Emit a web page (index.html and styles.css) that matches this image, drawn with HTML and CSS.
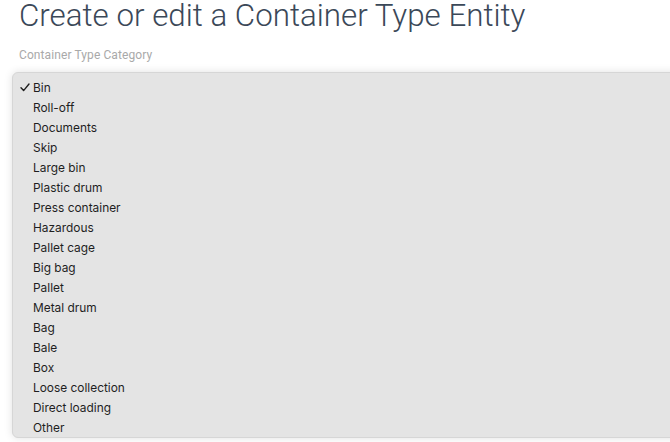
FILE: index.html
```html
<!DOCTYPE html>
<html>
<head>
<meta charset="utf-8">
<link rel="stylesheet" href="styles.css">
</head>
<body>
<div class="page">
  <h1 class="title">Create or edit a Container Type Entity</h1>
  <div class="label">Container Type Category</div>
  <div class="field-area">
    <ul class="menu">
      <li class="item selected"><span class="check"><svg width="10" height="9" viewBox="0 0 10 9"><polyline points="1,4.8 3.6,7.6 9,1" fill="none" stroke="#1f1f1f" stroke-width="1.4" stroke-linecap="round" stroke-linejoin="round"/></svg></span>Bin</li>
      <li class="item"><span class="check"></span>Roll-off</li>
      <li class="item"><span class="check"></span>Documents</li>
      <li class="item"><span class="check"></span>Skip</li>
      <li class="item"><span class="check"></span>Large bin</li>
      <li class="item"><span class="check"></span>Plastic drum</li>
      <li class="item"><span class="check"></span>Press container</li>
      <li class="item"><span class="check"></span>Hazardous</li>
      <li class="item"><span class="check"></span>Pallet cage</li>
      <li class="item"><span class="check"></span>Big bag</li>
      <li class="item"><span class="check"></span>Pallet</li>
      <li class="item"><span class="check"></span>Metal drum</li>
      <li class="item"><span class="check"></span>Bag</li>
      <li class="item"><span class="check"></span>Bale</li>
      <li class="item"><span class="check"></span>Box</li>
      <li class="item"><span class="check"></span>Loose collection</li>
      <li class="item"><span class="check"></span>Direct loading</li>
      <li class="item"><span class="check"></span>Other</li>
    </ul>
  </div>
</div>
</body>
</html>
```

FILE: styles.css
```css
html, body {
  margin: 0;
  padding: 0;
  background: #ffffff;
  overflow: hidden;
}
.page {
  width: 670px;
  height: 442px;
  overflow: hidden;
}
.title {
  margin: -2px 0 0 0;
  padding: 0 0 0 19px;
  font-family: Roboto, "Liberation Sans", sans-serif;
  font-weight: 300;
  font-size: 31.3px;
  line-height: 36px;
  color: #3b4858;
  white-space: nowrap;
}
.label {
  margin: 13px 0 0 19px;
  font-family: Roboto, "Liberation Sans", sans-serif;
  font-size: 12px;
  letter-spacing: 0.1px;
  line-height: 16px;
  color: #a9a9a9;
}
.field-area {
  position: relative;
  margin-top: 9px;
  height: 380px;
}
.menu {
  position: absolute;
  left: 12px;
  top: 0;
  width: 700px;
  margin: 0;
  padding: 4px 0 0 0;
  list-style: none;
  background: #e4e4e4;
  border: 1px solid #d6d6d6;
  border-radius: 6px;
  box-shadow: 0 0 8px rgba(0,0,0,0.12);
  box-sizing: border-box;
}
.item {
  display: flex;
  align-items: center;
  height: 20px;
  padding-left: 7px;
  font-family: Inter, "Liberation Sans", sans-serif;
  font-size: 11.9px;
  color: #1f1f1f;
}
.check {
  display: inline-flex;
  align-items: center;
  width: 13px;
}
```
